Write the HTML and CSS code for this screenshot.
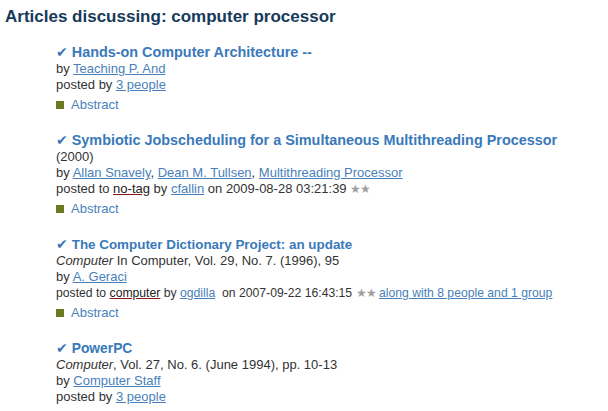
FILE: index.html
```html
<!DOCTYPE html>
<html>
<head>
<meta charset="utf-8">
<link rel="stylesheet" href="styles.css">
</head>
<body>
<h1 class="heading">Articles discussing: computer processor</h1>
<ul class="list">
  <li class="item">
    <div class="title"><span class="check">✔</span> Hands-on Computer Architecture --</div>
    <div class="line">by <a class="link" href="#">Teaching P. And</a></div>
    <div class="line">posted by <a class="link" href="#">3 people</a></div>
    <div class="abstract"><span class="sq"></span><a class="abs-link" href="#">Abstract</a></div>
  </li>
  <li class="item">
    <div class="title"><span class="check">✔</span> Symbiotic Jobscheduling for a Simultaneous Multithreading Processor</div>
    <div class="line">(2000)</div>
    <div class="line">by <a class="link" href="#">Allan Snavely</a>, <a class="link" href="#">Dean M. Tullsen</a>, <a class="link" href="#">Multithreading Processor</a></div>
    <div class="line">posted to <a class="tag" href="#">no-tag</a> by <a class="link" href="#">cfallin</a> on 2009-08-28 03:21:39 <span class="stars">★★</span></div>
    <div class="abstract"><span class="sq"></span><a class="abs-link" href="#">Abstract</a></div>
  </li>
  <li class="item">
    <div class="title"><span class="check">✔</span> <span class="title-text-sm">The Computer Dictionary Project: an update</span></div>
    <div class="line"><i>Computer</i> In Computer, Vol. 29, No. 7. (1996), 95</div>
    <div class="line">by <a class="link" href="#">A. Geraci</a></div>
    <div class="line line-narrow">posted to <a class="tag" href="#">computer</a> by <a class="link" href="#">ogdilla</a>&nbsp; on 2007-09-22 16:43:15 <span class="stars">★★</span> <a class="link" href="#">along with 8 people and 1 group</a></div>
    <div class="abstract"><span class="sq"></span><a class="abs-link" href="#">Abstract</a></div>
  </li>
  <li class="item">
    <div class="title"><span class="check">✔</span> <span class="title-text-md">PowerPC</span></div>
    <div class="line"><i>Computer</i>, Vol. 27, No. 6. (June 1994), pp. 10-13</div>
    <div class="line">by <a class="link" href="#">Computer Staff</a></div>
    <div class="line">posted by <a class="link" href="#">3 people</a></div>
  </li>
</ul>
</body>
</html>
```
FILE: styles.css
```css
html, body {
  margin: 0;
  padding: 0;
  background: #ffffff;
}
body {
  font-family: "Liberation Sans", Arial, sans-serif;
  color: #333333;
  font-size: 13px;
}
.heading {
  margin: 0;
  padding: 7px 0 0 5px;
  font-size: 17px;
  line-height: 19px;
  font-weight: bold;
  color: #17395a;
}
.list {
  list-style: none;
  margin: 0;
  padding: 18px 0 0 56px;
}
.item {
  margin-bottom: 19px;
}
.title {
  font-weight: bold;
  font-size: 14.4px;
  line-height: 17px;
  color: #3a79ba;
}
.title-text-sm {
  font-size: 13.4px;
}
.title-text-md {
  font-size: 13.8px;
}
.check {
  font-family: "DejaVu Sans", sans-serif;
  font-weight: normal;
  font-size: 14px;
}
.line {
  line-height: 16px;
}
.line-narrow {
  font-size: 12.2px;
}
.link {
  color: #4a7fb9;
  text-decoration: underline;
}
.tag {
  color: #222222;
  text-decoration: underline;
  text-decoration-color: #8b1a1a;
}
.stars {
  color: #a0a0a0;
  font-size: 12px;
  letter-spacing: -1px;
}
.abstract {
  display: flex;
  align-items: center;
  gap: 7px;
  margin-top: 4px;
  line-height: 16px;
}
.sq {
  width: 8px;
  height: 8px;
  background: #6b7b1f;
  display: inline-block;
}
.abs-link {
  color: #4a7fb9;
  text-decoration: none;
}
```
